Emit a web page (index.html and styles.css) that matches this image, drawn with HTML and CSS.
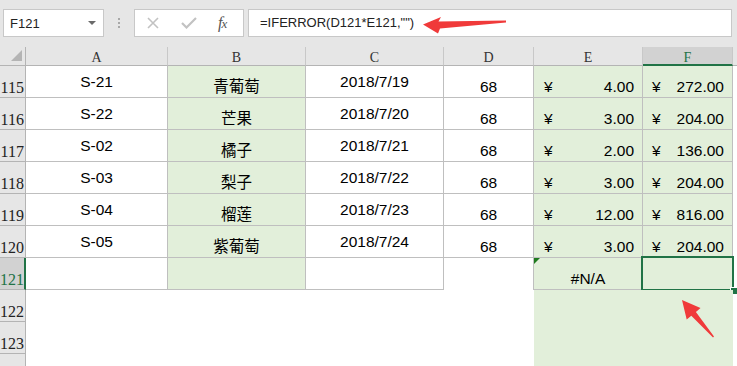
FILE: index.html
```html
<!DOCTYPE html>
<html lang="zh-CN">

<head>
  <meta charset="UTF-8">
  <meta name="viewport" content="width=device-width, initial-scale=1.0">
  <title>IFERROR</title>
  <link rel="stylesheet" href="styles.css">
</head>

<body>
  <div class="formula-bar">
    <div class="name-box">
      <span>F121</span>
      <span class="caret"></span>
    </div>
    <div class="grip"><i></i><i></i><i></i></div>
    <div class="fx-buttons">
      <svg class="btn-x" width="12" height="12" viewBox="0 0 12 12">
        <path d="M1 1 L11 11 M11 1 L1 11" stroke="#c2c2c2" stroke-width="1.6" fill="none" />
      </svg>
      <svg class="btn-ok" width="16" height="12" viewBox="0 0 16 12">
        <path d="M1 6 L5.5 10.5 L15 1" stroke="#c2c2c2" stroke-width="2.2" fill="none" />
      </svg>
      <span class="fx">f<span>x</span></span>
    </div>
    <div class="formula-input">=IFERROR(D121*E121,"")</div>
  </div>

  <div class="sheet">
    <!-- column headers -->
    <div class="corner"><div class="tri"></div></div>
    <div class="ch">A</div>
    <div class="ch">B</div>
    <div class="ch">C</div>
    <div class="ch">D</div>
    <div class="ch">E</div>
    <div class="ch active">F</div>
    <div class="ch last"></div>

    <div class="rh">115</div>
    <div class="cell b mid">S-21</div>
    <div class="cell b g">青葡萄</div>
    <div class="cell b mid">2018/7/19</div>
    <div class="cell b">68</div>
    <div class="cell b g acct"><span>¥</span><span>4.00</span></div>
    <div class="cell b g acct f"><span>¥</span><span>272.00</span></div>
    <div class="cell"></div>

    <div class="rh">116</div>
    <div class="cell b mid">S-22</div>
    <div class="cell b g">芒果</div>
    <div class="cell b mid">2018/7/20</div>
    <div class="cell b">68</div>
    <div class="cell b g acct"><span>¥</span><span>3.00</span></div>
    <div class="cell b g acct f"><span>¥</span><span>204.00</span></div>
    <div class="cell"></div>

    <div class="rh">117</div>
    <div class="cell b mid">S-02</div>
    <div class="cell b g">橘子</div>
    <div class="cell b mid">2018/7/21</div>
    <div class="cell b">68</div>
    <div class="cell b g acct"><span>¥</span><span>2.00</span></div>
    <div class="cell b g acct f"><span>¥</span><span>136.00</span></div>
    <div class="cell"></div>

    <div class="rh">118</div>
    <div class="cell b mid">S-03</div>
    <div class="cell b g">梨子</div>
    <div class="cell b mid">2018/7/22</div>
    <div class="cell b">68</div>
    <div class="cell b g acct"><span>¥</span><span>3.00</span></div>
    <div class="cell b g acct f"><span>¥</span><span>204.00</span></div>
    <div class="cell"></div>

    <div class="rh">119</div>
    <div class="cell b mid">S-04</div>
    <div class="cell b g">榴莲</div>
    <div class="cell b mid">2018/7/23</div>
    <div class="cell b">68</div>
    <div class="cell b g acct"><span>¥</span><span>12.00</span></div>
    <div class="cell b g acct f"><span>¥</span><span>816.00</span></div>
    <div class="cell"></div>

    <div class="rh">120</div>
    <div class="cell b mid">S-05</div>
    <div class="cell b g">紫葡萄</div>
    <div class="cell b mid">2018/7/24</div>
    <div class="cell b">68</div>
    <div class="cell b g acct"><span>¥</span><span>3.00</span></div>
    <div class="cell b g acct f"><span>¥</span><span>204.00</span></div>
    <div class="cell"></div>

    <div class="rh active">121</div>
    <div class="cell b"></div>
    <div class="cell b g"></div>
    <div class="cell b"></div>
    <div class="cell br"></div>
    <div class="cell b g error"><span class="flag"></span>#N/A</div>
    <div class="cell b g current"><div class="sel-box"><span class="handle"></span></div></div>
    <div class="cell"></div>

    <div class="rh">122</div>
    <div class="cell"></div>
    <div class="cell"></div>
    <div class="cell"></div>
    <div class="cell"></div>
    <div class="cell g"></div>
    <div class="cell g"></div>
    <div class="cell"></div>

    <div class="rh">123</div>
    <div class="cell"></div>
    <div class="cell"></div>
    <div class="cell"></div>
    <div class="cell"></div>
    <div class="cell g"></div>
    <div class="cell g"></div>
    <div class="cell"></div>

    <div class="rh"></div>
    <div class="cell"></div>
    <div class="cell"></div>
    <div class="cell"></div>
    <div class="cell"></div>
    <div class="cell g"></div>
    <div class="cell g"></div>
    <div class="cell"></div>
  </div>

  <!-- red callout arrows drawn over the sheet -->
  <svg class="arrows" width="737" height="366" viewBox="0 0 737 366">
    <polygon points="423,24.5 441,17 438.5,21.5 506,20.5 506,22.5 440,28.5 438,33.5" fill="#f03a3a" />
    <polygon points="682,300 700.5,308 695.9,311.9 714,336.6 713,337.4 691.3,315.7 686.7,319.6" fill="#f03a3a" />
  </svg>
</body>

</html>
```

FILE: styles.css
```css
body {
  margin: 0;
  width: 737px;
  height: 366px;
  overflow: hidden;
  position: relative;
  background: #fff;
  font-family: "Liberation Sans", "Noto Sans CJK SC", sans-serif;
  color: #000;
}

/* formula bar */
.formula-bar {
  height: 47px;
  box-sizing: border-box;
  padding-top: 9px;
  background: #e6e6e6;
  display: flex;
  align-items: flex-start;
  font-size: 13px;
  color: #222;
}

.name-box {
  margin-left: 3px;
  width: 101px;
  height: 28px;
  box-sizing: border-box;
  border: 1px solid #c8c8c8;
  background: #fff;
  display: flex;
  align-items: center;
  justify-content: space-between;
  padding: 0 7px 0 6px;
}

.name-box .caret {
  width: 0;
  height: 0;
  border-left: 4px solid transparent;
  border-right: 4px solid transparent;
  border-top: 4px solid #6a6a6a;
}

.grip {
  width: 3px;
  margin: 9px 13px 0 14px;
  display: flex;
  flex-direction: column;
  gap: 2px;
}

.grip i {
  display: block;
  width: 2px;
  height: 2px;
  background: #a8a8a8;
}

.fx-buttons {
  width: 110px;
  height: 28px;
  box-sizing: border-box;
  border: 1px solid #c8c8c8;
  background: #fff;
  display: flex;
  align-items: center;
  padding-left: 12px;
}

.btn-ok {
  margin-left: 22px;
}

.fx {
  margin-left: 21px;
  font-family: "Liberation Serif", serif;
  font-style: italic;
  font-size: 16px;
  color: #555;
  letter-spacing: -1px;
}

.fx span {
  font-size: 13px;
}

.formula-input {
  flex: 1;
  margin-left: 4px;
  margin-right: 5px;
  height: 28px;
  box-sizing: border-box;
  border: 1px solid #c8c8c8;
  background: #fff;
  padding-left: 11px;
  line-height: 26px;
}

/* grid */
.sheet {
  display: grid;
  grid-template-columns: 26px 142px 138px 138px 90px 109px 90px 1fr;
  grid-template-rows: 19px repeat(10, 32px);
  height: 319px;
  overflow: hidden;
}

.sheet > div {
  box-sizing: border-box;
  position: relative;
}

.corner {
  background: #e6e6e6;
  border-right: 1px solid #b4b4b4;
  border-bottom: 1px solid #b4b4b4;
  padding: 3px 0 0 11px;
}

.corner .tri {
  width: 11px;
  height: 11px;
  background: #b4b4b4;
  clip-path: polygon(100% 0, 100% 100%, 0 100%);
}

.ch {
  background: #e6e6e6;
  border-right: 1px solid #c8c8c8;
  border-bottom: 1px solid #b4b4b4;
  font-family: "Liberation Serif", serif;
  font-size: 14px;
  line-height: 18px;
  padding-top: 2px;
  text-align: center;
  color: #333;
}

.ch.last {
  border-right: none;
}

.ch.active {
  background: #d2d2d2;
  color: #217346;
  border-bottom: 2px solid #217346;
}

.rh {
  background: #e6e6e6;
  border-right: 1px solid #b4b4b4;
  border-bottom: 1px solid #b4b4b4;
  font-family: "Liberation Serif", serif;
  font-size: 16px;
  line-height: 16px;
  color: #222;
  display: flex;
  align-items: flex-end;
  justify-content: flex-end;
  padding-right: 1px;
  padding-bottom: 1px;
}

.rh.active {
  background: #d2d2d2;
  color: #217346;
  border-right: 2px solid #217346;
  padding-right: 0;
}

.cell {
  font-size: 15.5px;
  line-height: 18px;
  display: flex;
  justify-content: center;
  align-items: flex-end;
  padding-bottom: 1px;
}

.cell.b {
  border-right: 1px solid #bfbfbf;
  border-bottom: 1px solid #bfbfbf;
}

.cell.br {
  border-right: 1px solid #bfbfbf;
}

.cell.mid {
  align-items: center;
  padding-bottom: 0;
}

.cell.g {
  background: #e2efda;
}

.cell.acct {
  justify-content: space-between;
  padding-left: 10px;
  padding-right: 8px;
}

.cell.acct.f {
  padding-left: 9px;
}

.error .flag {
  position: absolute;
  top: 0;
  left: 0;
  width: 6px;
  height: 6px;
  background: #1e7a1e;
  clip-path: polygon(0 0, 100% 0, 0 100%);
}

.sel-box {
  position: absolute;
  top: -2px;
  left: -2px;
  right: -2px;
  bottom: -2px;
  border: 2px solid #217346;
}

.sel-box .handle {
  position: absolute;
  right: -5px;
  bottom: -5px;
  width: 6px;
  height: 6px;
  background: #217346;
  box-shadow: 0 0 0 1px #fff;
}

.arrows {
  position: absolute;
  top: 0;
  left: 0;
  pointer-events: none;
}
```
